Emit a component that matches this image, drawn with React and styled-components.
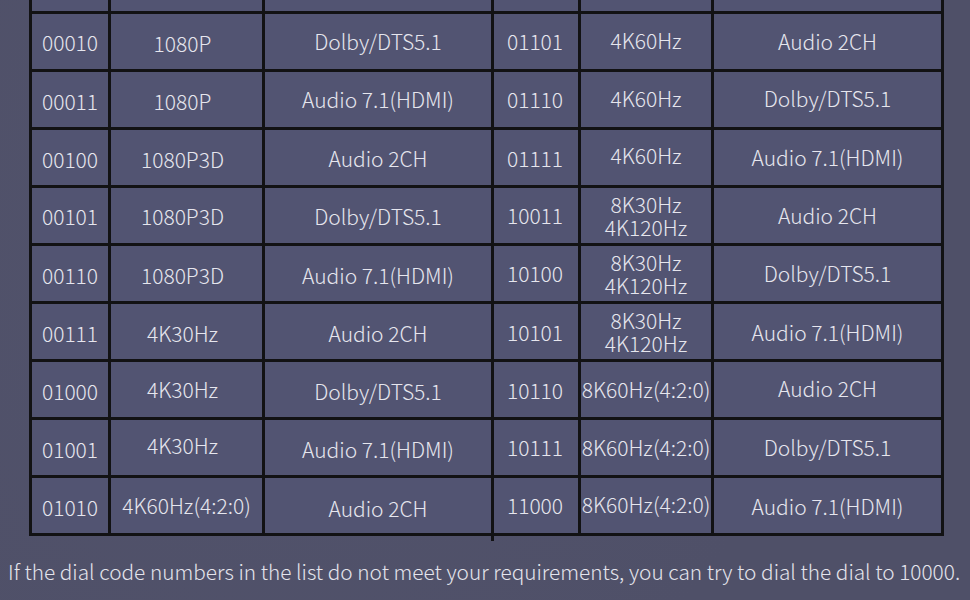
import React from 'react'
import styled, { createGlobalStyle } from 'styled-components'

const GlobalStyle = createGlobalStyle`
    html, body {
        margin: 0;
        padding: 0;
        background: #4f5068;
    }
    body {
        width: 970px;
        height: 600px;
        overflow: hidden;
        font-family: "Noto Sans CJK SC", "Noto Sans", sans-serif;
        font-weight: 300;
    }
`

const Page = styled.div`
    width: 970px;
    height: 600px;
    box-sizing: border-box;
    padding-left: 29px;
    background:
        radial-gradient(circle at 30% 40%, rgba(90, 92, 120, 0.25), transparent 70%),
        #4f5068;
`

const Grid = styled.div`
    position: relative;
    display: grid;
    grid-template-columns: 76px 151px 226px 84px 130px 227px;
    grid-template-rows: 11px repeat(9, 55px);
    gap: 3px;
    padding: 0 3px 3px 3px;
    width: max-content;
    background: #121214;

    &::after {
        content: '';
        position: absolute;
        left: 462px;
        top: 100%;
        width: 3px;
        height: 5px;
        background: #121214;
    }
`

const Cell = styled.div`
    background: #525472;
    color: #e6e6ee;
    font-size: 21px;
    font-weight: 300;
    line-height: 23px;
    display: flex;
    flex-direction: column;
    align-items: center;
    justify-content: center;
    text-align: center;
    white-space: nowrap;
    padding-right: ${p => p.$shift || 0}px;
    padding-top: ${p => (p.$dy > 0 ? p.$dy * 2 : 0)}px;
    padding-bottom: ${p => (p.$dy < 0 ? -p.$dy * 2 : 0)}px;
`

const Note = styled.p`
    margin: 20px 0 0 -21px;
    color: #e4e4ec;
    font-size: 20.8px;
    font-weight: 300;
    white-space: nowrap;
`

const rows = [
    ['00010', '1080P', 'Dolby/DTS5.1', '01101', '4K60Hz', 'Audio 2CH'],
    ['00011', '1080P', 'Audio 7.1(HDMI)', '01110', '4K60Hz', 'Dolby/DTS5.1'],
    ['00100', '1080P3D', 'Audio 2CH', '01111', '4K60Hz', 'Audio 7.1(HDMI)'],
    ['00101', '1080P3D', 'Dolby/DTS5.1', '10011', '8K30Hz\n4K120Hz', 'Audio 2CH'],
    ['00110', '1080P3D', 'Audio 7.1(HDMI)', '10100', '8K30Hz\n4K120Hz', 'Dolby/DTS5.1'],
    ['00111', '4K30Hz', 'Audio 2CH', '10101', '8K30Hz\n4K120Hz', 'Audio 7.1(HDMI)'],
    ['01000', '4K30Hz', 'Dolby/DTS5.1', '10110', '8K60Hz(4:2:0)', 'Audio 2CH'],
    ['01001', '4K30Hz', 'Audio 7.1(HDMI)', '10111', '8K60Hz(4:2:0)', 'Dolby/DTS5.1'],
    ['01010', '4K60Hz(4:2:0)', 'Audio 2CH', '11000', '8K60Hz(4:2:0)', 'Audio 7.1(HDMI)'],
]

// slight vertical drift of the text in the original image
const drift = [
    [1, 2, 0, 0, -1, 0],
    [2, 2, 0, 0, -1, -1],
    [2, 2, 1, 1, -2, 0],
    [1, 1, 1, 0, 0, 0],
    [2, 2, 2, 0, 0, 0],
    [2, 2, 2, 1, 0, 1],
    [2, 0, 2, 1, 0, -1],
    [2, -2, 2, 0, 0, 0],
    [2, 0, 3, 0, -1, 1],
]

const shifts = [0, 8, 0, 2, 0, -4]

function App() {
    return (
        <Page>
            <GlobalStyle />
            <Grid>
                {shifts.map((s, i) => <Cell key={'top' + i} />)}
                {rows.map((row, r) =>
                    row.map((text, c) => (
                        <Cell
                            key={r + '-' + c}
                            $shift={r === 8 && c === 1 ? 0 : shifts[c]}
                            $dy={drift[r][c]}
                        >
                            {text.split('\n').map(line => <span key={line}>{line}</span>)}
                        </Cell>
                    ))
                )}
            </Grid>
            <Note>
                If the dial code numbers in the list do not meet your requirements, you can try to dial the dial to 10000.
            </Note>
        </Page>
    )
}

export default App
